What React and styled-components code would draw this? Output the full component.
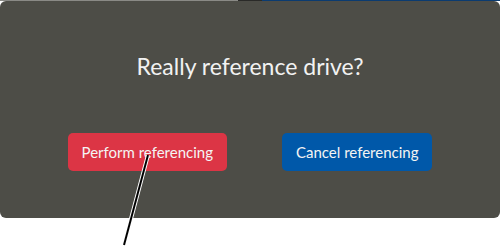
import React from "react"
import styled, { createGlobalStyle } from "styled-components"

const Global = createGlobalStyle`
  html, body {
    margin: 0;
    padding: 0;
    background: #ffffff;
    width: 500px;
    height: 250px;
    overflow: hidden;
  }
`

const Page = styled.div`
  position: relative;
  width: 500px;
  height: 250px;
  font-family: "Source Sans Pro", Lato, "Noto Sans", sans-serif;
`

const Behind = styled.div`
  display: flex;
  height: 1px;
`

const BehindPart = styled.div`
  width: ${(p) => p.w}px;
  background: ${(p) => p.color};
`

const Dialog = styled.div`
  box-sizing: border-box;
  width: 500px;
  height: 217px;
  background: #4d4d47;
  border-radius: 6px;
  display: flex;
  flex-direction: column;
  align-items: center;
  padding-top: 48px;
`

const Title = styled.h1`
  margin: 0;
  font-size: 23px;
  font-weight: 400;
  color: #f2f2f2;
  line-height: 35px;
`

const Buttons = styled.div`
  display: flex;
  gap: 55px;
  margin-top: 49px;
`

const Button = styled.button`
  height: 38px;
  padding: 0 14px;
  border: none;
  border-radius: 5px;
  font-family: inherit;
  font-size: 15px;
  color: #f4f4f4;
  background: ${(p) => (p.danger ? "#dc3545" : "#0058a9")};
  cursor: pointer;
`

const Pointer = styled.svg`
  position: absolute;
  left: 0;
  top: 0;
  pointer-events: none;
`

export default function App() {
  return (
    <Page>
      <Global />
      <Behind>
        <BehindPart w={238} color="#8a8a86" />
        <BehindPart w={24} color="#2a2a28" />
        <BehindPart w={238} color="#0b3b70" />
      </Behind>
      <Dialog>
        <Title>Really reference drive?</Title>
        <Buttons>
          <Button danger>Perform referencing</Button>
          <Button>Cancel referencing</Button>
        </Buttons>
      </Dialog>
      <Pointer width="500" height="250">
        <line x1="148" y1="155" x2="124" y2="245" stroke="#ffffff" strokeWidth="4" />
        <line x1="148" y1="155" x2="124" y2="245" stroke="#000000" strokeWidth="2" />
      </Pointer>
    </Page>
  )
}
